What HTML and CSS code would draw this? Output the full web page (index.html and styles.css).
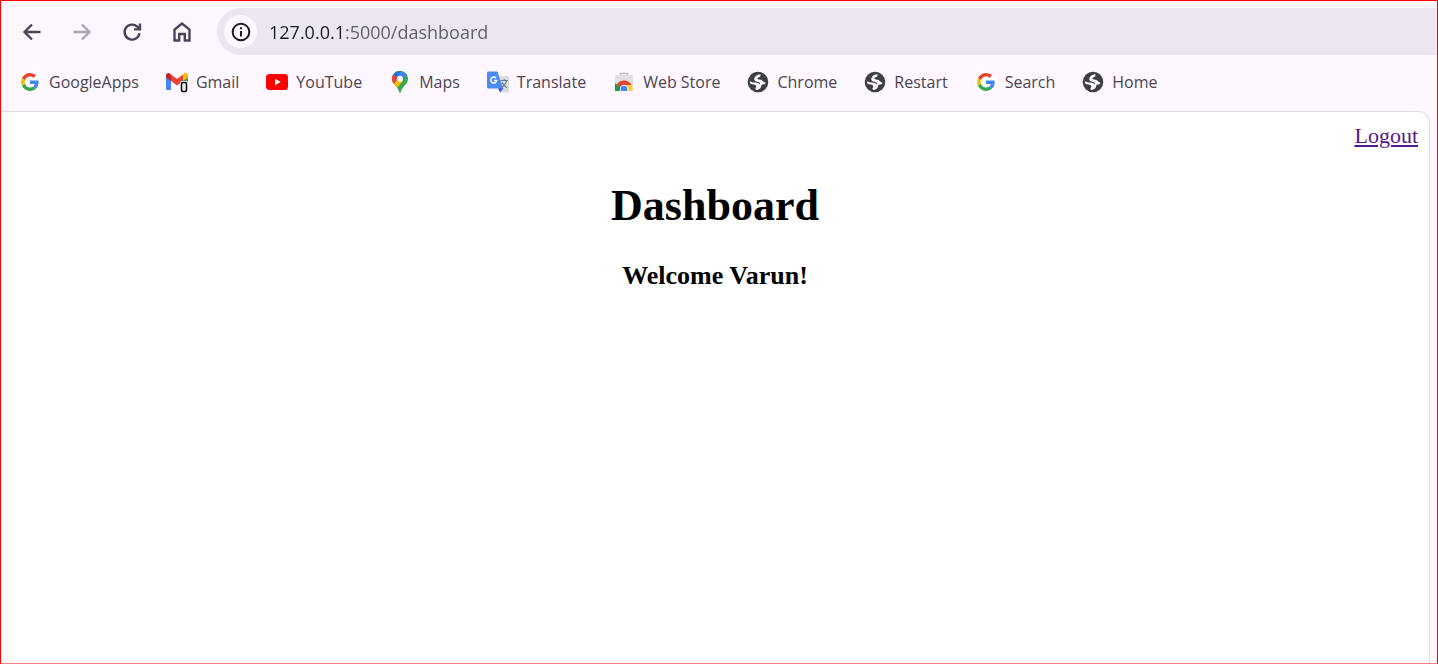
FILE: index.html
```html
<!DOCTYPE html>
<html lang="en">
<head>
<meta charset="utf-8">
<title>Dashboard</title>
<link rel="stylesheet" href="styles.css">
</head>
<body>
<svg class="symbols" aria-hidden="true">
  <symbol id="google" viewBox="0 0 22 22">
    <circle cx="11" cy="11" r="11" fill="#fff"/>
    <g transform="translate(2 2) scale(.375)">
      <path fill="#ea4335" d="M24 9.5c3.54 0 6.71 1.22 9.21 3.6l6.85-6.85C35.9 2.38 30.47 0 24 0 14.62 0 6.51 5.38 2.56 13.22l7.98 6.19C12.43 13.72 17.74 9.5 24 9.5z"/>
      <path fill="#4285f4" d="M46.98 24.55c0-1.57-.15-3.09-.38-4.55H24v9.02h12.94c-.58 2.96-2.26 5.48-4.78 7.18l7.73 6c4.51-4.18 7.09-10.36 7.09-17.65z"/>
      <path fill="#fbbc05" d="M10.53 28.59c-.48-1.45-.76-2.99-.76-4.59s.27-3.14.76-4.59l-7.98-6.19C.92 16.46 0 20.12 0 24s.92 7.54 2.56 10.78l7.97-6.19z"/>
      <path fill="#34a853" d="M24 48c6.48 0 11.93-2.13 15.89-5.81l-7.73-6c-2.15 1.45-4.92 2.3-8.16 2.3-6.26 0-11.57-4.22-13.47-9.91l-7.98 6.19C6.51 42.62 14.62 48 24 48z"/>
    </g>
  </symbol>
  <symbol id="globe" viewBox="0 0 22 22">
    <circle cx="11" cy="11" r="10.300" fill="#3c4043"/>
    <path fill="#fef7ff" d="M13.500 3.200c.3 1.600-.3 2.500-1.800 3-1.500.4-1.700 1.600-.5 2.100 1.200.4 2.600.3 3.700.9 1.500.8 1.700 2.200 3.600 2.500.3 1.400-1.600 1.700-3 1.700-1.100.1-1.200 1.100-1.500 2.400-.4 1.700-1.900 2.800-4 3.200-1.500-.1-2-1.100-1.300-2.200.6-.9 1-1.700.2-2.400-1.200-1-3.400-.6-4.800-1.300C3.100 12.500 2.800 11.500 3 10.300c1.500 1 3.400 1.200 5.300 1.200 2.100.1 3.900.7 4.300 2.100.7-.7.500-2-.7-2.400-1.600-.6-3.800-.5-4.500-2.200C6.600 6.600 9.200 3.300 13.500 3.200z"/>
  </symbol>
</svg>

<header class="chrome">
  <div class="toolbar">
    <nav class="controls" aria-label="Browser">
      <button class="control" type="button" aria-label="Back">
        <svg viewBox="0 0 20 20"><path d="M18.500 10H3M10 2.500 2.500 10l7.500 7.500"/></svg>
      </button>
      <button class="control" type="button" aria-label="Forward" disabled>
        <svg viewBox="0 0 20 20"><path d="M1.500 10H17M10 2.500l7.500 7.500-7.500 7.500"/></svg>
      </button>
      <button class="control" type="button" aria-label="Reload">
        <svg viewBox="0 0 20 20"><path d="M17.500 11.200a7.500 7.500 0 1 1-2.200-6.500l2.700 2.700M18 1.500V7.400H12"/></svg>
      </button>
      <button class="control" type="button" aria-label="Home">
        <svg viewBox="0 0 20 20"><path d="M2.500 18.500V7.500L10 1.500l7.500 6v11H12.800v-6.500H7.200v6.500z"/></svg>
      </button>
    </nav>
    <div class="omnibox">
      <button class="site-info" type="button" aria-label="View site information">
        <svg viewBox="0 0 20 20"><circle cx="10" cy="10" r="8.300"/><path d="M10 9v5.500M10 5.300v2"/></svg>
      </button>
      <input class="address" type="text" aria-label="Address" value="127.0.0.1:5000/dashboard" spellcheck="false">
    </div>
  </div>

  <nav class="bookmarks" aria-label="Bookmarks">
    <a class="bookmark" href="#"><svg viewBox="0 0 22 22"><use href="#google"/></svg>GoogleApps</a>
    <a class="bookmark" href="#"><svg viewBox="0 0 22 22">
      <path fill="#4285f4" d="M0 5v12.500c0 .8.600 1.500 1.500 1.500H5V9z"/>
      <path fill="#34a853" d="M17 19h3.500c.8 0 1.500-.7 1.500-1.500V5l-5 4z"/>
      <path fill="#fbbc04" d="M17 3.500V10l5-3.800V4.300c0-2-2.300-3.200-4-2z"/>
      <path fill="#ea4335" d="M5 10V3.500l6 4.500 6-4.500V10l-6 4.500z"/>
      <path fill="#c5221f" d="M0 4.300v1.900L5 10V3.500L4 2.500C2.400 1.300 0 2.300 0 4.300z"/>
      <rect x="14" y="10" width="8" height="12" rx="2" fill="#fef7ff"/>
      <rect x="15.500" y="11.500" width="5" height="9" rx="1.500" fill="#e6f4ea" stroke="#000" stroke-width="1.500"/>
    </svg>Gmail</a>
    <a class="bookmark" href="#"><svg viewBox="0 0 22 22"><rect y="3" width="22" height="16" rx="3.500" fill="#f00"/><path fill="#fff" d="M9 7.700v6.600l5.800-3.300z"/></svg>YouTube</a>
    <a class="bookmark" href="#"><svg viewBox="0 0 22 22">
      <clipPath id="pin"><path d="M11 0c4.500 0 8 3.300 8 7.700 0 5.800-5.800 7.300-7.200 13.300-.2 1.300-1.400 1.300-1.600 0C8.800 15 3 13.500 3 7.700 3 3.300 6.500 0 11 0z"/></clipPath>
      <g clip-path="url(#pin)">
        <path fill="#34a853" d="M0 0h22v22H0z"/>
        <path fill="#fbbc04" d="M2 12.500 8.500 5l5.500 5-7.500 8.500z"/>
        <path fill="#ea4335" d="M2 1.500 4.500 2.500 10 7l-5.200 6L2 12z"/>
        <path fill="#1a73e8" d="M4.500 2.800 7 0h6l-4.500 7.500z"/>
        <path fill="#4285f4" d="M12.500 0 18 3.500 11.500 11 8.500 5z"/>
      </g>
      <circle cx="11" cy="7.700" r="3" fill="#fff"/>
    </svg>Maps</a>
    <a class="bookmark" href="#"><svg viewBox="0 0 22 22">
      <path fill="#dadce0" d="M9 5h12c.6 0 1 .4 1 1v14.500c0 .6-.4 1-1 1h-8z"/>
      <path fill="#3a4fc4" d="M11 17h5.500L13 21.500z"/>
      <path fill="#4c8bf5" d="M1.500.500h9L16 17.500H1.500C.7 17.500 0 16.800 0 16V2C0 1.200.7.500 1.500.500z"/>
      <path fill="none" stroke="#fff" stroke-width="1.500" d="M9 7a3 3 0 1 0 .8 2.500H7"/>
      <path fill="none" stroke="#607d8b" stroke-width="1.200" d="M13.500 9.500H21M17.200 8v1.500M19.500 9.500c-.5 3-2.300 5.300-5 7M15 11.500c1 2.200 2.800 4 5 5.200"/>
    </svg>Translate</a>
    <a class="bookmark" href="#"><svg viewBox="0 0 22 22">
      <path fill="none" stroke="#bdbdbd" stroke-width="1.500" d="M7.500 5V2.500h7V5"/>
      <path fill="#e0e0e0" d="M2 4h18v16H2z"/>
      <clipPath id="bag"><path d="M2 4h18v16H2z"/></clipPath>
      <g clip-path="url(#bag)">
        <circle cx="11" cy="18" r="8.500" fill="#ffcd40"/>
        <path fill="#0f9d58" d="M2 12 11 20v2H2z"/>
        <path fill="#db4437" d="M3.600 13.700C7 7.800 15.500 8 18.500 14H11l-3.500 3z"/>
        <circle cx="11" cy="18" r="4.200" fill="#f1f1f1"/>
        <circle cx="11" cy="18" r="3.200" fill="#4285f4"/>
      </g>
    </svg>Web Store</a>
    <a class="bookmark" href="#"><svg viewBox="0 0 22 22"><use href="#globe"/></svg>Chrome</a>
    <a class="bookmark" href="#"><svg viewBox="0 0 22 22"><use href="#globe"/></svg>Restart</a>
    <a class="bookmark" href="#"><svg viewBox="0 0 22 22"><use href="#google"/></svg>Search</a>
    <a class="bookmark" href="#"><svg viewBox="0 0 22 22"><use href="#globe"/></svg>Home</a>
  </nav>
</header>

<main class="page">
  <a class="logout" href="#">Logout</a>
  <h1 class="title">Dashboard</h1>
  <h3 class="welcome">Welcome Varun!</h3>
</main>
</body>
</html>
```
FILE: styles.css
```css
* {
  box-sizing: border-box;
}

body {
  margin: 0;
  min-height: 100vh;
  display: flex;
  flex-direction: column;
  background: #fef7ff;
  border: 1px solid #f00;
  border-bottom-color: #f88080;
}

.symbols {
  display: none;
}

button {
  border: 0;
  padding: 0;
  background: none;
}

.chrome {
  font-family: "Open Sans", "Noto Sans", sans-serif;
  color: #49454f;
}

.toolbar {
  display: flex;
  padding: 7px 0 0 6px;
}

.controls {
  display: flex;
  margin-right: 10px;
}

.control {
  width: 50px;
  height: 47px;
  display: grid;
  place-items: center;
}

.control svg {
  width: 20px;
  height: 20px;
  fill: none;
  stroke: #4a4458;
  stroke-width: 2.4;
}

.control:disabled svg {
  stroke: #aaa5ae;
}

.omnibox {
  flex: 1;
  display: flex;
  align-items: center;
  gap: 12px;
  height: 47px;
  padding-left: 7px;
  background: #ece6f0;
  border-radius: 24px 0 0 24px;
}

.site-info {
  width: 33px;
  height: 33px;
  display: grid;
  place-items: center;
  background: #fef7ff;
  border-radius: 50%;
}

.site-info svg {
  width: 20px;
  height: 20px;
  fill: none;
  stroke: #1d1b20;
  stroke-width: 2;
}

/* The host part of the address is darker than the port and path. */
.address {
  flex: 1;
  border: 0;
  padding: 0;
  outline: 0;
  font: 400 18px "Open Sans", "Noto Sans", sans-serif;
  color: #49454f;
  background: linear-gradient(90deg, #1d1b20 76px, #5f5b66 76px);
  -webkit-background-clip: text;
  background-clip: text;
  -webkit-text-fill-color: transparent;
}

.bookmarks {
  display: flex;
  align-items: center;
  gap: 27px;
  height: 56px;
  padding: 0 0 2px 18px;
}

.bookmark {
  display: flex;
  align-items: center;
  gap: 8px;
  font-size: 16px;
  line-height: 24px;
  color: inherit;
  text-decoration: none;
  white-space: nowrap;
}

.bookmark svg {
  width: 22px;
  height: 22px;
}

.page {
  flex: 1;
  margin-right: 7px;
  padding: 11px 11px 0;
  background: #fff;
  border: solid #e1dbe5;
  border-width: 1px 1px 0 0;
  border-top-right-radius: 12px;
  font-family: "Liberation Serif", "Times New Roman", serif;
  font-size: 22px;
  line-height: 25px;
  text-align: center;
  color: #000;
}

.logout {
  display: block;
  width: fit-content;
  margin-left: auto;
  color: #551a8b;
}

.title {
  margin: 33px 0 30px;
  font-size: 44px;
  line-height: 50px;
}

.welcome {
  margin: 0;
  font-size: 26px;
  line-height: 30px;
}
```
